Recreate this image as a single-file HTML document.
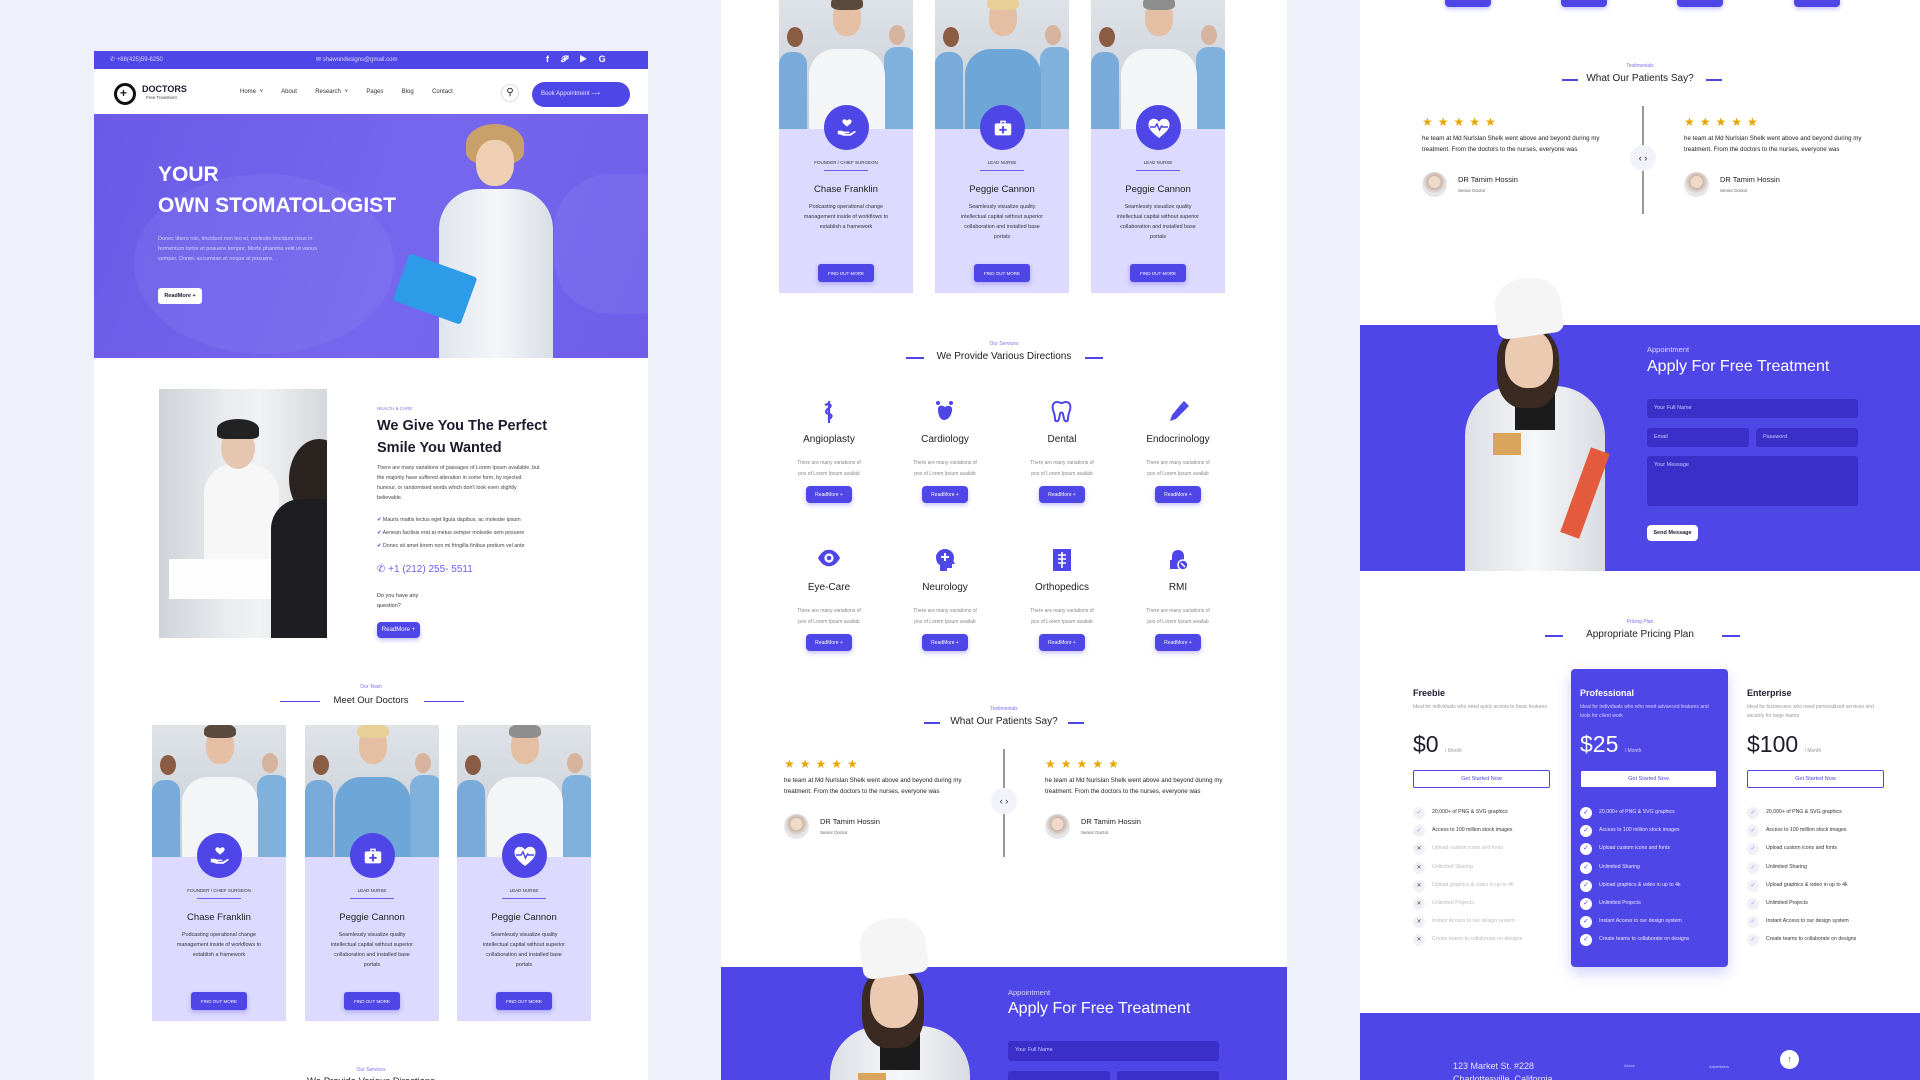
<!DOCTYPE html>
<html><head><meta charset="utf-8">
<style>
*{margin:0;padding:0;box-sizing:border-box}
html,body{width:1920px;height:1080px;overflow:hidden}
body{background:#eef0fa;font-family:"Liberation Sans",sans-serif;position:relative;color:#1c1c2e}
.a{position:absolute}
.col{position:absolute;background:#fff;overflow:hidden}
.pur{background:#4f46e8}
.t{position:absolute;white-space:nowrap}
.c{text-align:center}
.btn{position:absolute;background:#4f46e8;color:#fff;border-radius:4px;font-size:6px;display:flex;align-items:center;justify-content:center;box-shadow:0 2px 5px rgba(79,70,232,.35)}
.card{position:absolute;background:#dcdaff;overflow:hidden}
.img{position:absolute;left:0;top:0;width:100%;overflow:hidden;background:linear-gradient(#dfe3e8,#c5ccd4)}
.circ{position:absolute;width:45px;height:45px;border-radius:50%;background:#4f46e8;display:flex;align-items:center;justify-content:center}
.star{color:#e6a700;font-size:12px;letter-spacing:5px}
.inp{position:absolute;background:#3a30c9;border-radius:3px;color:#c9c6ff;font-size:5.5px;padding:6px 7px;overflow:hidden}
</style></head><body>
<div class="a" style="left:0;top:0;width:1920px;height:1080px;overflow:hidden">

<!-- ============ COLUMN 1 ============ -->
<div class="col" style="left:94px;top:51px;width:554px;height:1029px">
  <div class="a pur" style="left:0;top:0;width:554px;height:18px"></div>
  <div class="t" style="left:16px;top:5px;font-size:6px;color:#dcdaff">&#9990; +88(425)59-6250</div>
  <div class="t" style="left:222px;top:5px;font-size:6px;color:#dcdaff">&#9993; shawondesigns@gmail.com</div>
  <div class="t" style="left:452px;top:3px;font-size:9px;color:#fff;font-weight:bold;letter-spacing:12px">f&#120031;&#9654;G</div>
  <div class="a" style="left:20px;top:32px;width:22px;height:22px;border-radius:50%;border:3px solid #111;background:#fff"></div>
  <div class="t" style="left:26px;top:35px;font-size:12px;font-weight:bold">+</div>
  <div class="t" style="left:48px;top:33px;font-size:9px;font-weight:bold">DOCTORS</div>
  <div class="t" style="left:52px;top:44px;font-size:4.5px;color:#444">Free Treatment</div>
  <div class="t" style="left:146px;top:38px;font-size:6px;color:#333;word-spacing:2px">Home ˅&nbsp;&nbsp;&nbsp;&nbsp; About&nbsp;&nbsp;&nbsp;&nbsp; Research ˅&nbsp;&nbsp;&nbsp;&nbsp; Pages&nbsp;&nbsp;&nbsp;&nbsp; Blog&nbsp;&nbsp;&nbsp;&nbsp; Contact</div>
  <div class="a" style="left:407px;top:33px;width:18px;height:18px;border-radius:50%;border:1px solid #ddd;font-size:10px;text-align:center;line-height:16px">&#9906;</div>
  <div class="a pur" style="left:438px;top:31px;width:98px;height:25px;border-radius:13px"></div>
  <div class="t" style="left:447px;top:39px;font-size:6px;color:#e6e4ff">Book Appointment &#10230;</div>
  <div class="a" style="left:0;top:63px;width:554px;height:244px;overflow:hidden;background:linear-gradient(110deg,#6a5be6 0%,#7667ef 55%,#6d5ee8 100%)">
    <div class="a" style="left:40px;top:60px;width:260px;height:180px;border-radius:50%;background:rgba(255,255,255,.05)"></div>
    <div class="a" style="left:460px;top:60px;width:140px;height:140px;border-radius:40%;background:rgba(255,255,255,.06)"></div>
    <div class="a" style="left:372px;top:10px;width:58px;height:40px;border-radius:50% 50% 30% 30%;background:#c9a06a"></div>
    <div class="a" style="left:382px;top:26px;width:38px;height:46px;border-radius:45%;background:#efcfb4"></div>
    <div class="a" style="left:345px;top:75px;width:114px;height:180px;border-radius:40px 40px 0 0;background:linear-gradient(90deg,#dfe4ec,#f4f6f9,#d9dee6)"></div>
    <div class="a" style="left:305px;top:150px;width:72px;height:50px;background:#2d9be8;transform:rotate(20deg);border-radius:3px"></div>
  </div>
  <div class="t" style="left:64px;top:112px;font-size:21px;font-weight:bold;color:#fff">YOUR</div>
  <div class="t" style="left:64px;top:143px;font-size:21px;font-weight:bold;color:#fff">OWN STOMATOLOGIST</div>
  <div class="a" style="left:64px;top:183px;width:180px;font-size:5.5px;line-height:10px;color:#d8d4ff">Donec libero nisi, tincidunt non leo et, molestie tincidunt risus in fermentum tortor et posuere tempor. Morbi pharetra velit ut varius semper. Donec accumsan et neque at posuere.</div>
  <div class="a" style="left:64px;top:237px;width:44px;height:16px;background:#fff;border-radius:3px;font-size:5.5px;font-weight:bold;text-align:center;line-height:16px">ReadMore +</div>
  <div class="a" style="left:65px;top:338px;width:168px;height:249px;overflow:hidden;background:linear-gradient(90deg,#cfd3d8,#e9ebee 40%,#f1f2f3 60%,#d5d8dc)">
    <div class="a" style="left:45px;top:75px;width:75px;height:100px;border-radius:30px 30px 0 0;background:#f7f7f8"></div>
    <div class="a" style="left:62px;top:38px;width:34px;height:42px;border-radius:50%;background:#e5c6b0"></div>
    <div class="a" style="left:58px;top:30px;width:42px;height:20px;border-radius:50% 50% 20% 20%;background:#222"></div>
    <div class="a" style="left:10px;top:170px;width:120px;height:40px;background:#fdfdfd"></div>
    <div class="a" style="left:130px;top:50px;width:60px;height:80px;border-radius:50%;background:#2a2320"></div>
    <div class="a" style="left:112px;top:110px;width:70px;height:150px;background:#1e1e22;border-radius:30px 0 0 0"></div>
  </div>
  <div class="t" style="left:283px;top:355px;font-size:4.5px;color:#7b6ff0">HEALTH &amp; CARE</div>
  <div class="t" style="left:283px;top:364px;font-size:14.5px;font-weight:bold;line-height:22px">We Give You The Perfect<br>Smile You Wanted</div>
  <div class="a" style="left:283px;top:412px;width:165px;font-size:5.3px;line-height:10px;color:#444">There are many variations of passages of Lorem Ipsum available, but the majority have suffered alteration in some form, by injected humour, or randomised words which don't look even slightly believable.</div>
  <div class="a" style="left:283px;top:463px;font-size:5.3px;line-height:13px;color:#444;white-space:nowrap"><span style="color:#4f46e8">&#10004;</span> Mauris mattis lectus eget ligula dapibus, ac molestie ipsum<br><span style="color:#4f46e8">&#10004;</span> Aenean facilisis erat at metus semper molestie sem posuere<br><span style="color:#4f46e8">&#10004;</span> Donec sit amet lorem non mi fringilla finibus pretium vel ante</div>
  <div class="t" style="left:283px;top:513px;font-size:10px;color:#6b60ee">&#9990; +1 (212) 255- 5511</div>
  <div class="a" style="left:283px;top:540px;font-size:5.5px;line-height:10px;color:#333">Do you have any<br>question?</div>
  <div class="btn" style="left:283px;top:571px;width:43px;height:16px">ReadMore +</div>
  <div class="t c" style="left:0;width:554px;top:633px;font-size:5px;color:#7b6ff0">Our Team</div>
  <div class="t c" style="left:0;width:554px;top:644px;font-size:9.5px;color:#222">Meet Our Doctors</div>
  <div class="a" style="left:186px;top:650px;width:40px;height:1px;background:#4f46e8"></div>
  <div class="a" style="left:330px;top:650px;width:40px;height:1px;background:#4f46e8"></div>
  <div class="t c" style="left:0;width:554px;top:1016px;font-size:5px;color:#7b6ff0">Our Services</div>
  <div class="t c" style="left:0;width:554px;top:1025px;font-size:9.5px;color:#222">We Provide Various Directions</div>
</div>

<div class="col" style="left:721px;top:0;width:566px;height:1080px"></div>
<div class="col" style="left:1360px;top:0;width:560px;height:1080px"></div>

<div id="cards"></div>

<div class="t c" style="left:721px;width:566px;top:341px;font-size:5px;color:#7b6ff0">Our Services</div>
<div class="t c" style="left:721px;width:566px;top:351px;font-size:10px;color:#222">We Provide Various Directions</div>
<div class="a" style="left:906px;top:357px;width:18px;height:1.5px;background:#4f46e8"></div>
<div class="a" style="left:1085px;top:357px;width:18px;height:1.5px;background:#4f46e8"></div>

<div id="svc"></div>

<div class="t c" style="left:721px;width:566px;top:706px;font-size:5px;color:#7b6ff0">Testimonials</div>
<div class="t c" style="left:721px;width:566px;top:716px;font-size:10px;color:#222">What Our Patients Say?</div>
<div class="a" style="left:924px;top:722px;width:16px;height:1.5px;background:#4f46e8"></div>
<div class="a" style="left:1068px;top:722px;width:16px;height:1.5px;background:#4f46e8"></div>
<div class="a" style="left:1003px;top:749px;width:1.5px;height:108px;background:#999"></div>
<div class="a" style="left:991px;top:788px;width:26px;height:26px;border-radius:50%;background:#f2f2fa;font-size:9px;text-align:center;line-height:26px">‹ ›</div>

<div class="a pur" style="left:721px;top:967px;width:566px;height:113px"></div>
<div id="nurse2"></div>
<div class="t" style="left:1008px;top:988px;font-size:7.5px;color:#dcdaff">Appointment</div>
<div class="t" style="left:1008px;top:1000px;font-size:16px;color:#fff">Apply For Free Treatment</div>
<div class="inp" style="left:1008px;top:1041px;width:211px;height:20px">Your Full Name</div>
<div class="inp" style="left:1008px;top:1071px;width:102px;height:9px;border-radius:3px 3px 0 0"></div>
<div class="inp" style="left:1117px;top:1071px;width:102px;height:9px;border-radius:3px 3px 0 0"></div>

<div class="btn" style="left:1445px;top:-10px;width:46px;height:17px"></div>
<div class="btn" style="left:1561px;top:-10px;width:46px;height:17px"></div>
<div class="btn" style="left:1677px;top:-10px;width:46px;height:17px"></div>
<div class="btn" style="left:1794px;top:-10px;width:46px;height:17px"></div>

<div class="t c" style="left:1360px;width:560px;top:63px;font-size:5px;color:#7b6ff0">Testimonials</div>
<div class="t c" style="left:1360px;width:560px;top:73px;font-size:10px;color:#222">What Our Patients Say?</div>
<div class="a" style="left:1562px;top:79px;width:16px;height:1.5px;background:#4f46e8"></div>
<div class="a" style="left:1706px;top:79px;width:16px;height:1.5px;background:#4f46e8"></div>
<div class="a" style="left:1642px;top:106px;width:1.5px;height:108px;background:#999"></div>
<div class="a" style="left:1630px;top:145px;width:26px;height:26px;border-radius:50%;background:#f2f2fa;font-size:9px;text-align:center;line-height:26px">‹ ›</div>

<div class="a pur" style="left:1360px;top:325px;width:560px;height:246px"></div>
<div id="nurse3"></div>
<div class="t" style="left:1647px;top:345px;font-size:7.5px;color:#dcdaff">Appointment</div>
<div class="t" style="left:1647px;top:358px;font-size:16px;color:#fff">Apply For Free Treatment</div>
<div class="inp" style="left:1647px;top:399px;width:211px;height:19px">Your Full Name</div>
<div class="inp" style="left:1647px;top:428px;width:102px;height:19px">Email</div>
<div class="inp" style="left:1756px;top:428px;width:102px;height:19px">Password</div>
<div class="inp" style="left:1647px;top:456px;width:211px;height:50px">Your Message</div>
<div class="a" style="left:1647px;top:525px;width:51px;height:16px;background:#fff;border-radius:4px;font-size:5.5px;font-weight:bold;text-align:center;line-height:16px">Send Message</div>

<div class="t c" style="left:1360px;width:560px;top:619px;font-size:5px;color:#7b6ff0">Pricing Plan</div>
<div class="t c" style="left:1360px;width:560px;top:629px;font-size:10px;color:#222">Appropriate Pricing Plan</div>
<div class="a" style="left:1545px;top:635px;width:18px;height:1.5px;background:#4f46e8"></div>
<div class="a" style="left:1722px;top:635px;width:18px;height:1.5px;background:#4f46e8"></div>
<div class="a pur" style="left:1571px;top:669px;width:157px;height:298px;border-radius:4px;box-shadow:0 6px 14px rgba(79,70,232,.25)"></div>
<div id="pricing"></div>

<div class="a pur" style="left:1360px;top:1013px;width:560px;height:67px;overflow:hidden">
  <div class="t" style="left:93px;top:47px;font-size:9px;color:#e6e4ff;line-height:13px">123 Market St. #228<br>Charlottesville, California</div>
  <div class="t" style="left:264px;top:50px;font-size:4px;color:#c9c6ff">About</div>
  <div class="t" style="left:349px;top:51px;font-size:4px;color:#c9c6ff">Advertisers</div>
  <div class="a" style="left:420px;top:37px;width:19px;height:19px;border-radius:50%;background:#fff;color:#4f46e8;font-size:9px;text-align:center;line-height:19px">↑</div>
</div>
</div>

<script>
function doctor(x,y,role,name,desc,icon,variant){
  var coatL = variant==1 ? '#6fa6d8' : '#f4f5f7';
  var hair = variant==0 ? '#5a4a3e' : (variant==1 ? '#e8cf97' : '#8e8e8e');
  return '<div class="card" style="left:'+x+'px;top:'+y+'px;width:134px;height:296px">'+
  '<div class="img" style="height:132px">'+
   '<div class="a" style="left:0;top:55px;width:28px;height:80px;background:#78abd9;border-radius:12px 12px 0 0"></div>'+
   '<div class="a" style="left:105px;top:50px;width:32px;height:85px;background:#7fb1dc;border-radius:12px 12px 0 0"></div>'+
   '<div class="a" style="left:8px;top:30px;width:16px;height:20px;border-radius:50%;background:#8a5c44"></div>'+
   '<div class="a" style="left:110px;top:28px;width:16px;height:20px;border-radius:50%;background:#d6b39e"></div>'+
   '<div class="a" style="left:30px;top:52px;width:76px;height:85px;border-radius:26px 26px 0 0;background:'+coatL+'"></div>'+
   '<div class="a" style="left:54px;top:3px;width:28px;height:36px;border-radius:45%;background:#e4bfa4"></div>'+
   '<div class="a" style="left:52px;top:-2px;width:32px;height:15px;border-radius:50% 50% 30% 30%;background:'+hair+'"></div>'+
  '</div>'+
  '<div class="circ" style="left:45px;top:108px">'+icon+'</div>'+
  '<div class="t c" style="left:0;width:134px;top:163px;font-size:4.5px;color:#333">'+role+'</div>'+
  '<div class="a" style="left:45px;top:173px;width:44px;height:1px;background:#6b60ee"></div>'+
  '<div class="t c" style="left:0;width:134px;top:187px;font-size:9.5px;color:#222">'+name+'</div>'+
  '<div class="a c" style="left:24px;width:86px;top:205px;font-size:5.4px;line-height:10px;color:#333">'+desc+'</div>'+
  '<div class="btn" style="left:39px;top:267px;width:56px;height:18px;border-radius:3px;font-size:4.5px">FIND OUT MORE</div>'+
  '</div>';
}
var ic1='<svg width="22" height="22" viewBox="0 0 24 24" fill="#fff"><path d="M12 10.5C9 8 7 6.6 7 4.8 7 3.4 8 2.5 9.2 2.5c1.1 0 2 .6 2.8 1.6.8-1 1.7-1.6 2.8-1.6C16 2.5 17 3.4 17 4.8c0 1.8-2 3.2-5 5.7z"/><path d="M2 15h4l3 1h5c1 0 1 1.6 0 1.6H10v.8h5l5-3c1-.5 2 .5 1.3 1.3L16 20.5H8l-4-1.5H2z"/></svg>';
var ic2='<svg width="22" height="22" viewBox="0 0 24 24" fill="#fff"><path d="M9 4h6v3h-1.6V5.6h-2.8V7H9z"/><rect x="3" y="7" width="18" height="13" rx="2"/><path d="M11 10h2v3h3v2h-3v3h-2v-3H8v-2h3z" fill="#4f46e8"/></svg>';
var ic3='<svg width="24" height="22" viewBox="0 0 24 22" fill="#fff"><path d="M12 21C5 15.5 1.5 12 1.5 7.2 1.5 4 4 1.8 6.8 1.8c2.2 0 3.9 1.1 5.2 3 1.3-1.9 3-3 5.2-3C20 1.8 22.5 4 22.5 7.2 22.5 12 19 15.5 12 21z"/><path d="M3 10h5l2-3 2.5 6 2-4 1.2 1H21" stroke="#4f46e8" stroke-width="1.5" fill="none"/></svg>';
var d1='Podcasting operational change management inside of workflows to establish a framework';
var d2='Seamlessly visualize quality intellectual capital without superior collaboration and installed base portals';
var h='';
var sets=[[152,725],[305,725],[457,725]];
var sets2=[[779,-3],[935,-3],[1091,-3]];
var dat=[['FOUNDER / CHIEF SURGEON','Chase Franklin',d1,ic1,0],['LEAD NURSE','Peggie Cannon',d2,ic2,1],['LEAD NURSE','Peggie Cannon',d2,ic3,2]];
for(var i=0;i<3;i++){h+=doctor(sets[i][0],sets[i][1],dat[i][0],dat[i][1],dat[i][2],dat[i][3],dat[i][4]);h+=doctor(sets2[i][0],sets2[i][1],dat[i][0],dat[i][1],dat[i][2],dat[i][3],dat[i][4]);}
document.getElementById('cards').innerHTML=h;

var P='#4f46e8';
var icons=[
'<svg width="22" height="24" viewBox="0 0 22 24" fill="none" stroke="'+P+'" stroke-width="2.2"><path d="M11 1v22"/><path d="M7 5c4-2 8 0 4 3-4 3-4 5 0 6 4 1 3 4-1 5"/></svg>',
'<svg width="24" height="24" viewBox="0 0 24 24" fill="'+P+'"><path d="M5 9c0-3 3-4 5-3l2 1 2-1c3-1 6 1 5 5-1 5-4 9-8 9-4 0-6-5-6-11z"/><circle cx="5" cy="3" r="2"/><circle cx="18" cy="3" r="2"/></svg>',
'<svg width="22" height="24" viewBox="0 0 22 24" fill="none" stroke="'+P+'" stroke-width="2"><path d="M6 2c-4 0-5 4-4 8 1 3 2 5 2 9 0 3 3 3 4 0l1-5c.5-2 2.5-2 3 0l1 5c1 3 4 3 4 0 0-4 1-6 2-9 1-4 0-8-4-8-2 0-3 1-4.5 1S8 2 6 2z"/></svg>',
'<svg width="24" height="24" viewBox="0 0 24 24" fill="'+P+'"><path d="M16 3l5 5-11 11-6 2 2-6z"/><path d="M18 1l5 5-2 2-5-5z"/></svg>',
'<svg width="26" height="20" viewBox="0 0 26 20"><path d="M1 10C5 3 9 1 13 1s8 2 12 9c-4 7-8 9-12 9S5 17 1 10z" fill="'+P+'"/><circle cx="13" cy="10" r="5" fill="#fff"/><circle cx="13" cy="10" r="2.5" fill="'+P+'"/></svg>',
'<svg width="22" height="24" viewBox="0 0 22 24" fill="'+P+'"><path d="M11 1c5 0 9 4 9 8 0 2-1 3 0 5l1 2h-3v4h-5v3H6v-6C3 16 2 12 2 9c0-4 4-8 9-8z"/><path d="M10 5h2v3h3v2h-3v3h-2v-3H7V8h3z" fill="#fff"/></svg>',
'<svg width="20" height="24" viewBox="0 0 20 24" fill="'+P+'"><rect x="1" y="1" width="18" height="22"/><path d="M10 4v16M6 7h8M6 11h8M6 15h8" stroke="#fff" stroke-width="1.6"/></svg>',
'<svg width="24" height="24" viewBox="0 0 24 24" fill="'+P+'"><path d="M12 2c4 0 6 3 6 6v4H6V8c0-3 2-6 6-6z"/><path d="M4 12h11v9H4z"/><circle cx="17" cy="17" r="5" fill="'+P+'" stroke="#fff" stroke-width="1.5"/><path d="M15 15l4 4" stroke="#fff" stroke-width="1.5"/></svg>'];
var names=['Angioplasty','Cardiology','Dental','Endocrinology','Eye-Care','Neurology','Orthopedics','RMI'];
var cx=[829,945,1062,1178];
var s='';
for(var k=0;k<8;k++){
 var r=Math.floor(k/4), c=k%4, x=cx[c], y0=r?548:400;
 s+='<div class="a" style="left:'+(x-12)+'px;top:'+y0+'px;width:24px;height:26px;display:flex;justify-content:center">'+icons[k]+'</div>';
 s+='<div class="t c" style="left:'+(x-60)+'px;width:120px;top:'+(y0+34)+'px;font-size:10px;color:#222">'+names[k]+'</div>';
 s+='<div class="a c" style="left:'+(x-45)+'px;width:90px;top:'+(y0+58)+'px;font-size:5px;line-height:11px;color:#888">There are many variations of<br>pos of Lorem Ipsum availab</div>';
 s+='<div class="btn" style="left:'+(x-23)+'px;top:'+(y0+86)+'px;width:46px;height:17px;font-size:5px">ReadMore +</div>';
}
function testi(x,y){
 return '<div class="t star" style="left:'+x+'px;top:'+y+'px">★★★★★</div>'+
 '<div class="a" style="left:'+x+'px;top:'+(y+19)+'px;width:178px;font-size:6.2px;line-height:10.5px;color:#222">he team at Md Nurlslan Shelk went above and beyond during my treatment. From the doctors to the nurses, everyone was</div>'+
 '<div class="a" style="left:'+x+'px;top:'+(y+57)+'px;width:25px;height:25px;border-radius:50%;background:radial-gradient(circle at 50% 40%,#efd9c8 30%,#c9b3a3 32%,#e8e6ea 60%)"></div>'+
 '<div class="t" style="left:'+(x+36)+'px;top:'+(y+60)+'px;font-size:7.5px;color:#222">DR Tamim Hossin</div>'+
 '<div class="t" style="left:'+(x+36)+'px;top:'+(y+73)+'px;font-size:4.5px;color:#666">Senior Doctor</div>';
}
s+=testi(784,757)+testi(1045,757)+testi(1422,115)+testi(1684,115);
document.getElementById('svc').innerHTML=s;

function nurse(x,y,clipBottom){
 return '<div class="a" style="left:'+x+'px;top:'+y+'px;width:200px;height:'+clipBottom+'px;overflow:hidden">'+
 '<div class="a" style="left:30px;top:108px;width:140px;height:220px;border-radius:50px 50px 0 0;background:linear-gradient(90deg,#dcdfe5,#f6f7f9 50%,#d8dbe1)"></div>'+
 '<div class="a" style="left:80px;top:112px;width:40px;height:40px;background:#1b1b1b"></div>'+
 '<div class="a" style="left:62px;top:50px;width:62px;height:80px;border-radius:40%;background:#3a2a22"></div>'+
 '<div class="a" style="left:70px;top:52px;width:48px;height:58px;border-radius:45%;background:#ecc9b1"></div>'+
 '<div class="a" style="left:60px;top:0;width:66px;height:58px;border-radius:45% 45% 15% 15%;background:#f5f5f5;transform:rotate(-8deg)"></div>'+
 '<div class="a" style="left:140px;top:170px;width:20px;height:90px;background:#e45a3c;transform:rotate(20deg)"></div>'+
 '<div class="a" style="left:58px;top:155px;width:28px;height:22px;background:#d9a55d"></div>'+
 '</div>';
}
document.getElementById('nurse2').innerHTML=nurse(800,918,162);
document.getElementById('nurse3').innerHTML=nurse(1435,278,293);

function plan(x,title,desc,price,pro){
 var tc=pro?'#fff':'#1c1c2e', dc=pro?'#d6d3ff':'#999';
 var feats=['20,000+ of PNG &amp; SVG graphics','Access to 100 million stock images','Upload custom icons and fonts','Unlimited Sharing','Upload graphics &amp; video in up to 4k','Unlimited Projects','Instant Access to our design system','Create teams to collaborate on designs'];
 var o='<div class="t" style="left:'+x+'px;top:688px;font-size:9px;font-weight:bold;color:'+tc+'">'+title+'</div>'+
 '<div class="a" style="left:'+x+'px;top:703px;width:135px;font-size:5px;line-height:9px;color:'+dc+'">'+desc+'</div>'+
 '<div class="t" style="left:'+x+'px;top:731px;font-size:23px;color:'+tc+'">'+price+' <span style="font-size:5px;color:'+dc+'">/ Month</span></div>'+
 '<div class="a" style="left:'+x+'px;top:770px;width:137px;height:18px;border:1px solid #4f46e8;background:#fff;border-radius:2px;font-size:5.5px;color:#4f46e8;text-align:center;line-height:16px">Get Started Now</div>';
 for(var i=0;i<8;i++){
  var y=806+i*18.2, on = pro || x>1700 || i<2;
  var ic = pro ? '<div class="a" style="left:'+x+'px;top:'+(y+1)+'px;width:12px;height:12px;border-radius:50%;background:#fff;color:#4f46e8;font-size:7px;text-align:center;line-height:12px">&#10003;</div>'
     : '<div class="a" style="left:'+x+'px;top:'+(y+1)+'px;width:12px;height:12px;border-radius:50%;background:#f0f0f6;color:'+(on?'#9a94f0':'#555')+';font-size:6px;text-align:center;line-height:12px">'+(on?'&#10003;':'&#10005;')+'</div>';
  o+=ic+'<div class="a" style="left:'+(x+19)+'px;top:'+(y+2)+'px;width:115px;font-size:5.2px;line-height:9px;color:'+(pro?'#eceaff':(on?'#333':'#bbb'))+'">'+feats[i]+'</div>';
 }
 return o;
}
document.getElementById('pricing').innerHTML=
 plan(1413,'Freebie','Ideal for individuals who need quick access to basic features','$0',false)+
 plan(1580,'Professional','Ideal for individuals who who need advanced features and tools for client work','$25',true)+
 plan(1747,'Enterprise','Ideal for businesses who need personalized services and security for large teams','$100',false);
</script>
</body></html>
